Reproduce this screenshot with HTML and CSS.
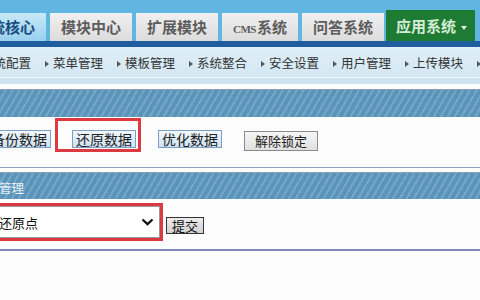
FILE: index.html
```html
<!DOCTYPE html>
<html lang="zh-CN">
<head>
    <meta charset="UTF-8">
    <title>数据库管理</title>
    <link rel="stylesheet" href="styles.css">
</head>
<body>
    <div id="top">
        <div class="tabs">
            <div class="tab active">系统核心</div>
            <div class="tab">模块中心</div>
            <div class="tab">扩展模块</div>
            <div class="tab"><span class="cms">CMS</span>系统</div>
            <div class="tab">问答系统</div>
            <div class="tab app">应用系统 <span class="caret"></span></div>
        </div>
    </div>
    <div id="strip"></div>
    <div id="nav">
        <span class="nav-item">系统配置</span>
        <span class="nav-item">菜单管理</span>
        <span class="nav-item">模板管理</span>
        <span class="nav-item">系统整合</span>
        <span class="nav-item">安全设置</span>
        <span class="nav-item">用户管理</span>
        <span class="nav-item">上传模块</span>
        <span class="nav-item">采集管理</span>
    </div>
    <div id="band"></div>

    <div class="panel-head"></div>
    <div class="tools">
        <button class="btn-blue">备份数据</button>
        <span class="mark tools-mark"><button class="btn-blue">还原数据</button></span>
        <button class="btn-blue optimize">优化数据</button>
        <button class="btn-gray">解除锁定</button>
    </div>

    <div class="panel-head second"><span class="head-title">管理</span></div>
    <div class="restore">
        <span class="mark">
            <div class="select">
                <span>还原点</span>
                <svg width="13" height="8" viewBox="0 0 13 8">
                    <polyline points="1.5,1.5 6.5,6.2 11.5,1.5" fill="none" stroke="#111" stroke-width="2.3"/>
                </svg>
            </div>
        </span>
        <button class="btn-submit">提交</button>
    </div>
</body>
</html>
```

FILE: styles.css
```css
body {
    margin: 0;
    width: 480px;
    height: 300px;
    overflow: hidden;
    background-color: #fdfdfd;
    font-family: "Noto Sans CJK SC", "DejaVu Sans", sans-serif;
    color: #333;
}

#top {
    height: 41px;
    background-color: #61b6e1;
    display: flex;
    align-items: flex-end;
}

.tabs {
    display: flex;
    align-items: flex-end;
    margin-left: -36px;
}

.tab {
    height: 28px;
    line-height: 28px;
    padding: 0 11px;
    margin-right: 4px;
    background: linear-gradient(#f0f0f0, #dcdcdc);
    color: #5c5c5c;
    font-size: 15px;
    font-weight: bold;
    white-space: nowrap;
}

.tab .cms {
    font-family: "Liberation Serif", serif;
    font-size: 11px;
    letter-spacing: -0.5px;
    margin-right: 1px;
}

.tab.active {
    background: linear-gradient(#c8e8f8, #98d0ee);
    color: #1b4d82;
}

.tab.app {
    height: 31px;
    line-height: 31px;
    margin-left: -2px;
    padding: 0 8px 0 10px;
    background: #1e7b34;
    color: #d6ecd6;
}

.caret {
    display: inline-block;
    vertical-align: middle;
    margin-left: 2px;
    border-top: 4px solid #e8f4e8;
    border-left: 3px solid transparent;
    border-right: 3px solid transparent;
}

#strip {
    height: 6px;
    background-color: #1f5d9f;
}

#nav {
    height: 30px;
    display: flex;
    align-items: center;
    gap: 14px;
    margin-left: -27px;
    background: linear-gradient(#e0eff8, #d3e7f3);
    border-bottom: 1px solid #f3f9fd;
    font-size: 12.5px;
    color: #333;
    white-space: nowrap;
}

.nav-item::before {
    content: "";
    display: inline-block;
    vertical-align: middle;
    margin-right: 4px;
    border-left: 4px solid #555;
    border-top: 3px solid transparent;
    border-bottom: 3px solid transparent;
}

#band {
    height: 6px;
    margin-bottom: 5px;
    background-color: #cde3ef;
}

.panel-head {
    height: 27px;
    border-top: 1px solid #8a9fb6;
    background-color: #5c95bb;
    background-image: repeating-linear-gradient(120deg, #5b93b9 0 4px, #73a7c8 4px 6px);
}

.panel-head.second {
    height: 26px;
    margin-top: 4px;
    line-height: 26px;
}

.head-title {
    margin-left: -1px;
    font-size: 12.5px;
    color: #eaf1f7;
}

.tools {
    height: 49px;
    display: flex;
    align-items: flex-start;
    margin-left: -13px;
    padding-top: 1px;
    border-bottom: 1px solid #8fa3bd;
}

button {
    font-family: "Noto Sans CJK SC", sans-serif;
    cursor: pointer;
}

.btn-blue {
    height: 18px;
    margin-top: 12px;
    padding: 0 3px;
    border: 1px solid #7e9ec4;
    background: linear-gradient(#f2f8fd, #cde2f3);
    color: #222;
    font-size: 14px;
    line-height: 16px;
}

.mark {
    display: flex;
    align-items: center;
    border: 3px solid #dc3a40;
}

.tools-mark {
    margin-left: 4px;
    padding: 9px 2px 1px 14px;
}

.tools-mark .btn-blue {
    margin-top: 0;
}

.optimize {
    margin-left: 17px;
}

.btn-gray {
    height: 20px;
    margin-top: 13px;
    margin-left: 22px;
    padding: 0 10px;
    border: 1px solid #8a8a8a;
    background: linear-gradient(#f6f6f6, #e0e0e0);
    color: #222;
    font-size: 13px;
    line-height: 18px;
}

.restore {
    height: 46px;
    display: flex;
    align-items: flex-start;
    margin-left: -10px;
    padding-top: 4px;
    border-bottom: 2px solid #7f88b8;
}

.restore .mark {
    width: 167px;
}

.select {
    width: 167px;
    height: 32px;
    box-sizing: border-box;
    display: flex;
    align-items: center;
    justify-content: space-between;
    padding: 0 5px 0 5px;
    border: 1px solid #9a9a9a;
    background-color: #fff;
    font-size: 13px;
    color: #111;
}

.btn-submit {
    height: 17px;
    margin-top: 14px;
    margin-left: 3px;
    padding: 0 5px;
    border: 1px solid #333;
    background: linear-gradient(#ececec, #d2d2d2);
    color: #111;
    font-size: 13px;
    line-height: 15px;
}
```
